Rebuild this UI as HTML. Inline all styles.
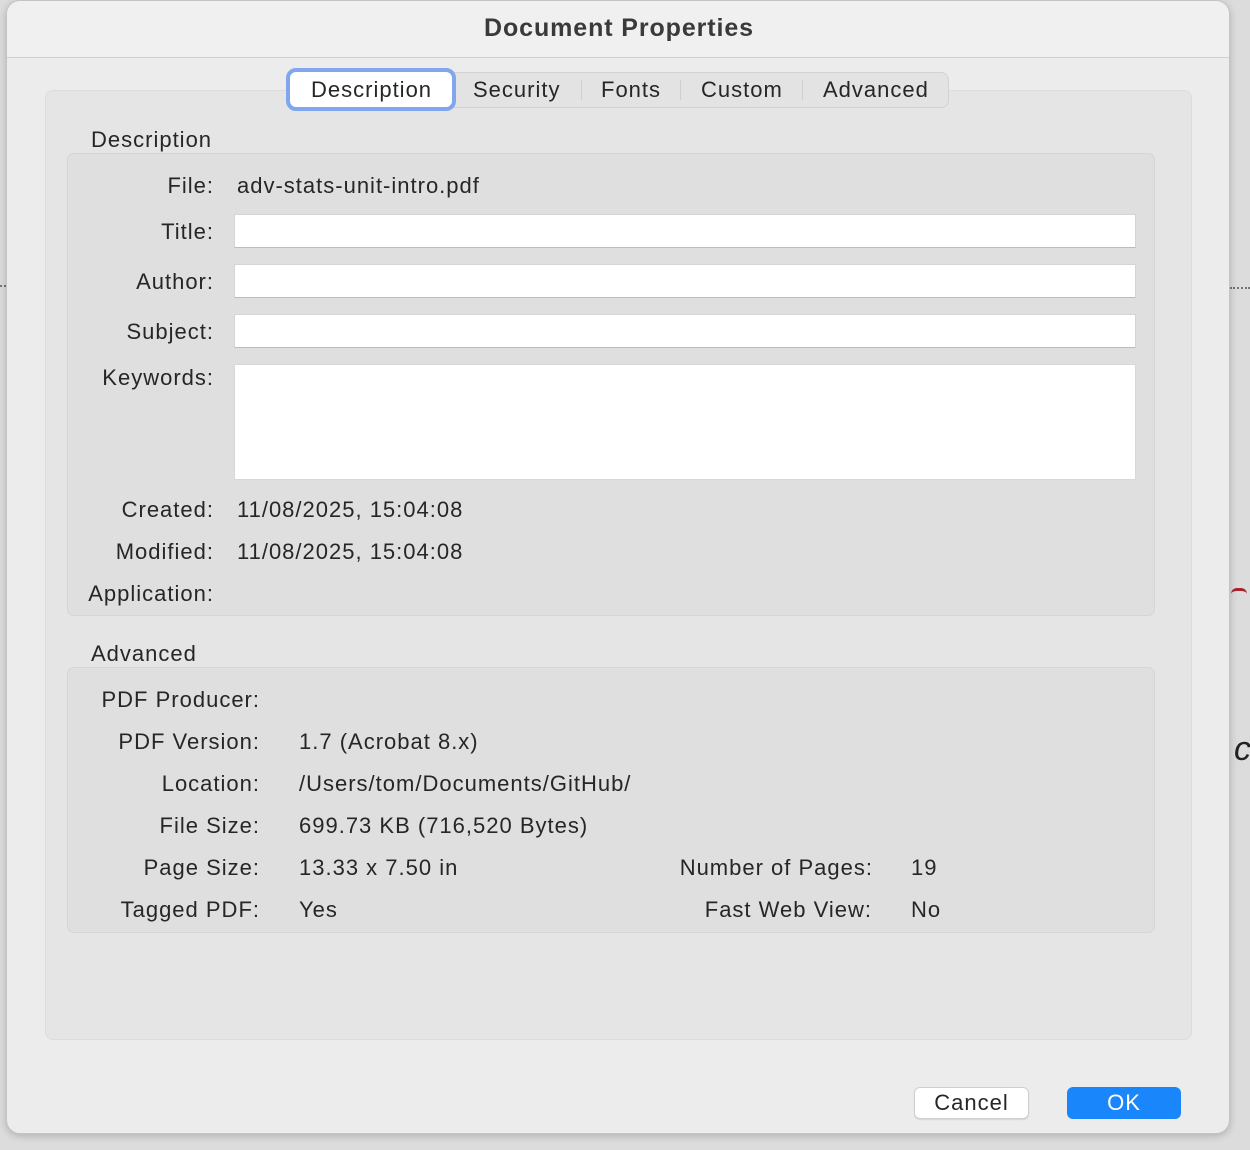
<!DOCTYPE html>
<html><head><meta charset="utf-8"><style>
*{margin:0;padding:0;box-sizing:border-box}
body{width:1250px;height:1150px;background:#dcdcdc;position:relative;overflow:hidden;font-family:"Liberation Sans",sans-serif;color:#262626;font-size:22px;letter-spacing:1px}
.abs{position:absolute}
.win{left:6px;top:0;width:1224px;height:1134px;background:#ececec;border-radius:14px;border:1px solid #c4c4c4;box-shadow:0 2px 8px rgba(0,0,0,.2);overflow:hidden}
.tb{left:0;top:0;width:100%;height:57px;background:#f0f0f0;border-bottom:1px solid #d0d0d0}
.t{position:absolute;line-height:24px;white-space:nowrap}
.r{text-align:right}
.field{position:absolute;background:#fff;border:1px solid #d4d4d4;border-bottom-color:#bcbcbc}
</style></head><body>
<div class="abs" style="left:0;top:285px;width:6px;border-top:2px dotted #777"></div>
<div class="abs" style="left:1230px;top:287px;width:20px;border-top:2px dotted #777"></div>
<div class="abs" style="left:1231px;top:588px;width:16px;height:6px;border-top:3px solid #a8242c;border-radius:8px 8px 0 0"></div>
<div class="abs" style="left:1234px;top:730px;font-size:34px;font-style:italic;color:#222">c</div>
<div class="abs win">
  <div class="abs tb"></div>
  <div class="t" style="left:0;width:1224px;text-align:center;top:15px;font-weight:bold;font-size:25px;letter-spacing:0.9px;color:#3a3a3a">Document Properties</div>
  <div class="abs" style="left:38px;top:89px;width:1147px;height:950px;background:#e5e5e5;border:1px solid #dcdcdc;border-radius:8px"></div>
  <div class="abs" style="left:282px;top:71px;width:660px;height:36px;background:#e3e3e3;border:1px solid #d2d2d2;border-radius:8px"></div>
  <div class="abs" style="left:279px;top:67px;width:170px;height:43px;background:#fff;border:4px solid #7fa6ef;border-radius:10px"></div>
  <div class="t" style="left:304px;top:77px">Description</div>
  <div class="t" style="left:466px;top:77px">Security</div>
  <div class="abs" style="left:574px;top:79px;width:1px;height:20px;background:#cfcfcf"></div>
  <div class="t" style="left:594px;top:77px">Fonts</div>
  <div class="abs" style="left:673px;top:79px;width:1px;height:20px;background:#cfcfcf"></div>
  <div class="t" style="left:694px;top:77px">Custom</div>
  <div class="abs" style="left:795px;top:79px;width:1px;height:20px;background:#cfcfcf"></div>
  <div class="t" style="left:816px;top:77px">Advanced</div>

  <div class="t" style="left:84px;top:127px">Description</div>
  <div class="abs" style="left:60px;top:152px;width:1088px;height:463px;background:#dfdfdf;border:1px solid #d5d5d5;border-radius:7px"></div>
  <div class="t r" style="left:0;width:207px;top:173px">File:</div>
  <div class="t" style="left:230px;top:173px">adv-stats-unit-intro.pdf</div>
  <div class="t r" style="left:0;width:207px;top:219px">Title:</div>
  <div class="field" style="left:227px;top:213px;width:902px;height:34px"></div>
  <div class="t r" style="left:0;width:207px;top:269px">Author:</div>
  <div class="field" style="left:227px;top:263px;width:902px;height:34px"></div>
  <div class="t r" style="left:0;width:207px;top:319px">Subject:</div>
  <div class="field" style="left:227px;top:313px;width:902px;height:34px"></div>
  <div class="t r" style="left:0;width:207px;top:365px">Keywords:</div>
  <div class="field" style="left:227px;top:363px;width:902px;height:116px;border-color:#d8d8d8"></div>
  <div class="t r" style="left:0;width:207px;top:497px">Created:</div>
  <div class="t" style="left:230px;top:497px">11/08/2025, 15:04:08</div>
  <div class="t r" style="left:0;width:207px;top:539px">Modified:</div>
  <div class="t" style="left:230px;top:539px">11/08/2025, 15:04:08</div>
  <div class="t r" style="left:0;width:207px;top:581px">Application:</div>

  <div class="t" style="left:84px;top:641px">Advanced</div>
  <div class="abs" style="left:60px;top:666px;width:1088px;height:266px;background:#dfdfdf;border:1px solid #d5d5d5;border-radius:7px"></div>
  <div class="t r" style="left:0;width:253px;top:687px">PDF Producer:</div>
  <div class="t r" style="left:0;width:253px;top:729px">PDF Version:</div>
  <div class="t" style="left:292px;top:729px">1.7 (Acrobat 8.x)</div>
  <div class="t r" style="left:0;width:253px;top:771px">Location:</div>
  <div class="t" style="left:292px;top:771px">/Users/tom/Documents/GitHub/</div>
  <div class="t r" style="left:0;width:253px;top:813px">File Size:</div>
  <div class="t" style="left:292px;top:813px">699.73 KB (716,520 Bytes)</div>
  <div class="t r" style="left:0;width:253px;top:855px">Page Size:</div>
  <div class="t" style="left:292px;top:855px">13.33 x 7.50 in</div>
  <div class="t r" style="left:500px;width:366px;top:855px">Number of Pages:</div>
  <div class="t" style="left:904px;top:855px">19</div>
  <div class="t r" style="left:0;width:253px;top:897px">Tagged PDF:</div>
  <div class="t" style="left:292px;top:897px">Yes</div>
  <div class="t r" style="left:500px;width:365px;top:897px">Fast Web View:</div>
  <div class="t" style="left:904px;top:897px">No</div>

  <div class="abs" style="left:907px;top:1086px;width:115px;height:32px;background:#fff;border:1px solid #cfcfcf;border-radius:6px;box-shadow:0 1px 1px rgba(0,0,0,.1)"></div>
  <div class="t" style="left:907px;width:115px;text-align:center;top:1090px">Cancel</div>
  <div class="abs" style="left:1060px;top:1086px;width:114px;height:32px;background:#1a86fb;border-radius:6px"></div>
  <div class="t" style="left:1060px;width:114px;text-align:center;top:1090px;color:#fff">OK</div>
</div>
</body></html>
